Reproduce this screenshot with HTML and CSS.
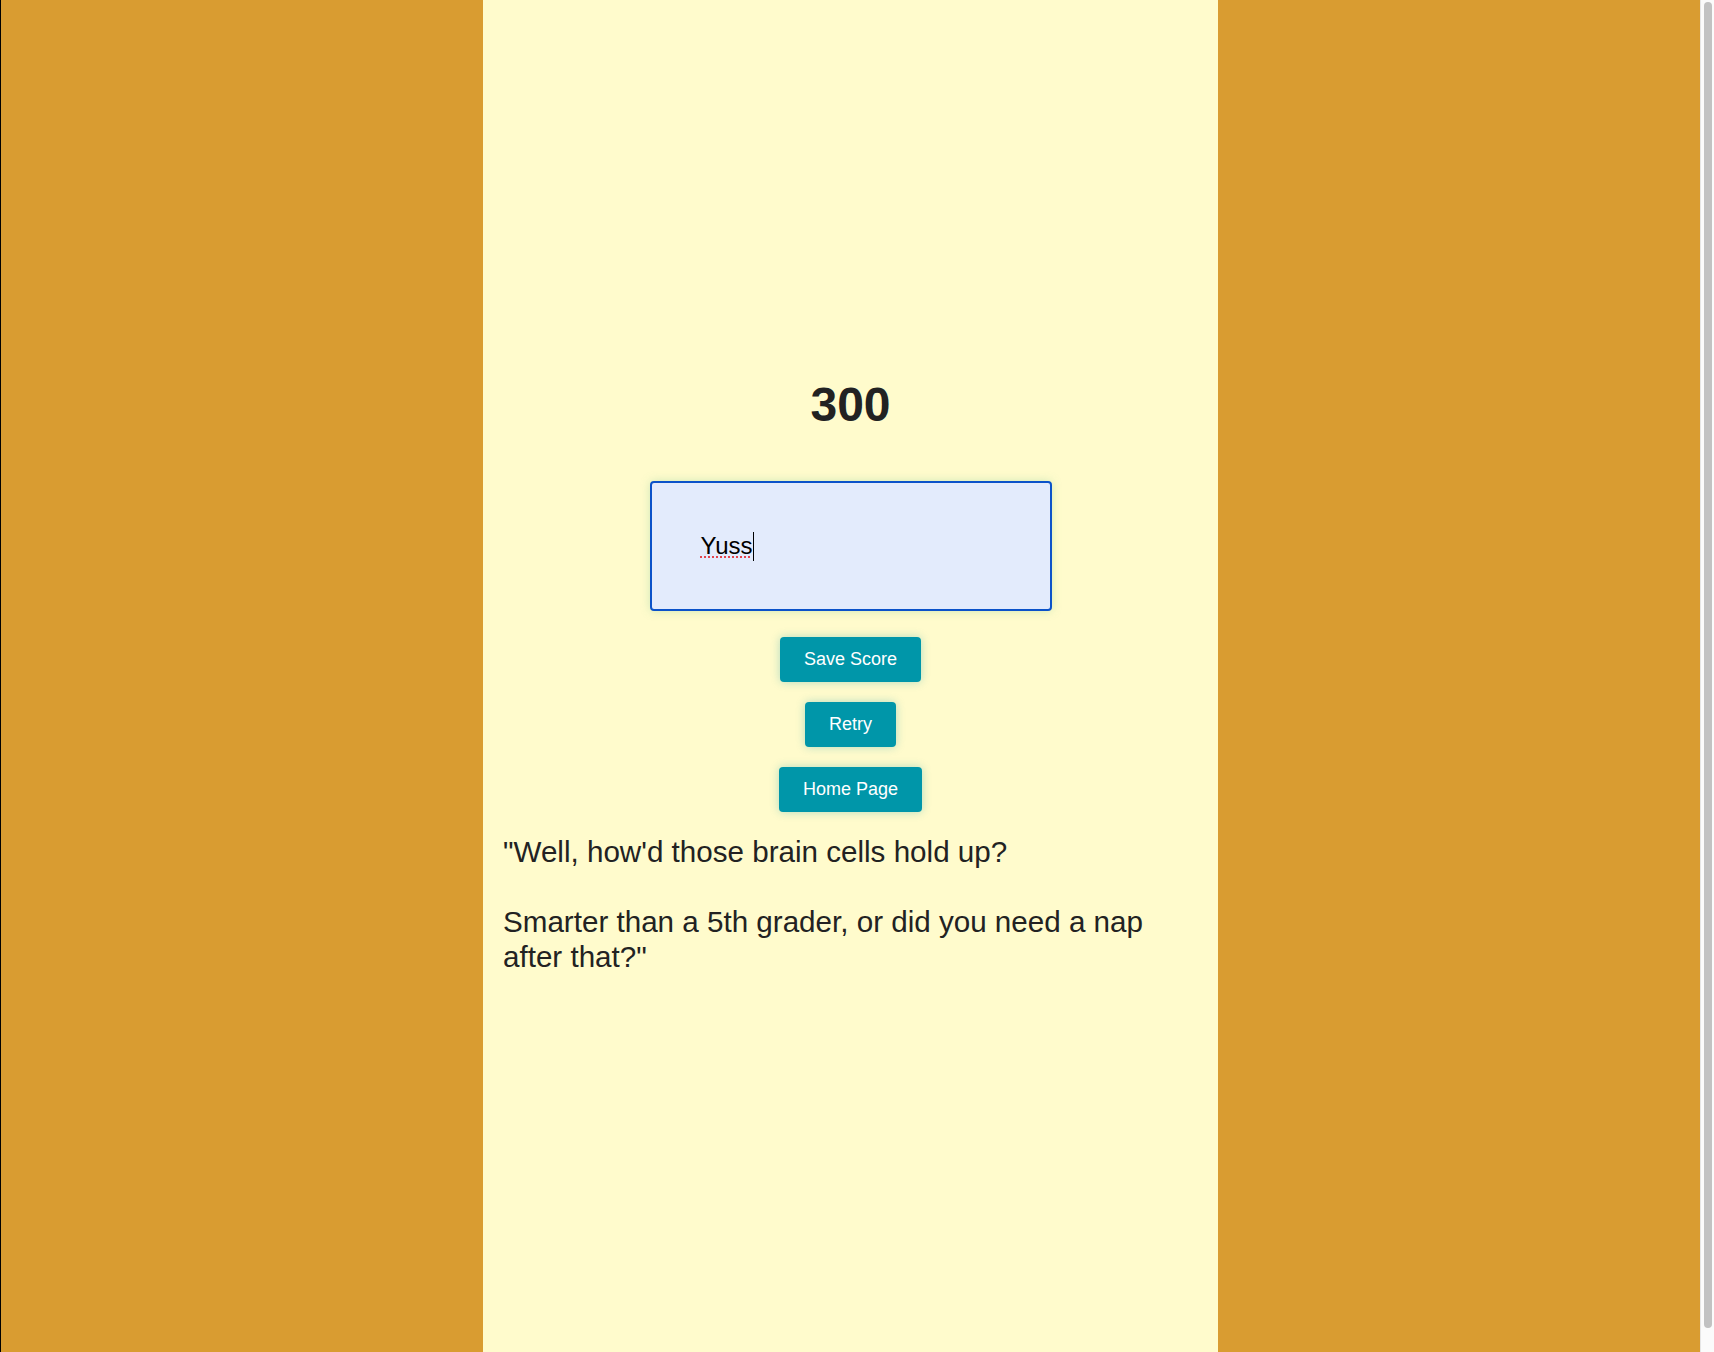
FILE: index.html
```html
<!DOCTYPE html>
<html lang="en">
<head>
<meta charset="utf-8">
<title>Quiz Complete</title>
<link rel="stylesheet" href="styles.css">
</head>
<body>
<div class="window">
  <div class="page">
    <main class="panel">
      <h1 class="score">300</h1>
      <div class="name-field">
        <span class="typed">Yuss</span><span class="caret"></span>
      </div>
      <div class="actions">
        <button class="btn">Save Score</button>
        <button class="btn">Retry</button>
        <button class="btn">Home Page</button>
      </div>
      <div class="quote">
        <p class="quote-line">"Well, how'd those brain cells hold up?</p>
        <p class="quote-line">Smarter than a 5th grader, or did you need a nap after that?"</p>
      </div>
    </main>
  </div>
  <div class="scrollbar">
    <div class="scrollbar-thumb"></div>
  </div>
</div>
</body>
</html>
```
FILE: styles.css
```css
html,
body {
  margin: 0;
  height: 100%;
  overflow: hidden;
}

body {
  background: #d99c31;
  font-family: "Liberation Sans", Arial, Helvetica, sans-serif;
  color: #222;
}

.window {
  display: flex;
  height: 100vh;
}

.page {
  flex: 1;
  border-left: 1px solid #000;
  background: #d99c31;
  display: flex;
  justify-content: center;
}

.scrollbar {
  width: 14px;
  box-sizing: border-box;
  background: #fbfbfb;
  border-left: 1px solid #e6e6e6;
  padding: 2px 2px 24px 3px;
  display: flex;
}

.scrollbar-thumb {
  flex: 1;
  background: #c2c2c2;
  border-radius: 5px;
}

.panel {
  width: 735px;
  height: 100%;
  background: #fffbcc;
  box-sizing: border-box;
  padding: 0 20px;
  display: flex;
  flex-direction: column;
  align-items: center;
  justify-content: center;
}

.score {
  margin: 0 0 49px;
  font-size: 48px;
  line-height: 54px;
  font-weight: 700;
  color: #222;
}

.name-field {
  width: 402px;
  height: 130px;
  box-sizing: border-box;
  border: 2px solid #0b52c9;
  border-radius: 4px;
  background: #e3ebfc;
  padding-left: 49px;
  display: flex;
  align-items: center;
  box-shadow: 0 0 10px rgba(120, 200, 150, 0.35);
  font-size: 24px;
  color: #000;
}

.typed {
  text-decoration: underline dotted #e2454d;
  text-decoration-thickness: 2px;
  text-underline-offset: 2px;
}

.caret {
  width: 1px;
  height: 29px;
  background: #000;
}

.actions {
  margin-top: 26px;
  display: flex;
  flex-direction: column;
  align-items: center;
  gap: 20px;
}

.btn {
  font-family: "Liberation Sans", Arial, Helvetica, sans-serif;
  font-size: 18px;
  line-height: 21px;
  padding: 12px 24px;
  border: none;
  border-radius: 4px;
  background: #0096a9;
  color: #fff;
  box-shadow: 0 0 10px rgba(0, 150, 169, 0.3);
  cursor: pointer;
}

.quote {
  align-self: stretch;
  margin-top: 22px;
}

.quote-line {
  margin: 0;
  font-size: 29.6px;
  line-height: 35px;
  color: #222;
}

.quote-line + .quote-line {
  margin-top: 35px;
}
```
